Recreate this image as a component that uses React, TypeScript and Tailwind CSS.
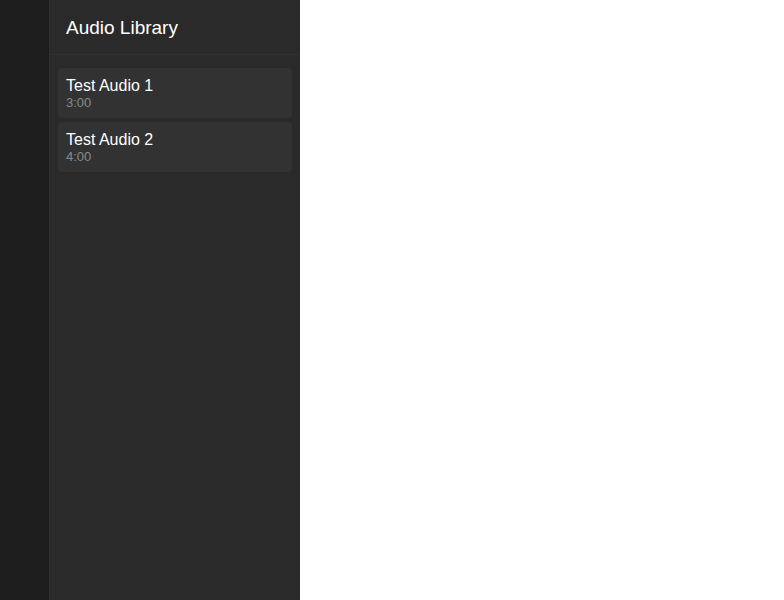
export default function App() {
  const items = [
    { title: "Test Audio 1", dur: "3:00" },
    { title: "Test Audio 2", dur: "4:00" },
  ];
  return (
    <div className="flex h-[600px] w-[784px] bg-white" style={{ fontFamily: "'Liberation Sans', Arial, sans-serif" }}>
      <div className="w-[50px] shrink-0 bg-[#1e1e1e] border-r border-[#2f2f2f]" />
      <div className="w-[250px] shrink-0 bg-[#2a2a2a] flex flex-col">
        <div className="h-[55px] shrink-0 flex items-center px-4 pt-[2px] border-b border-[#303030]">
          <span className="text-[19px] text-white">Audio Library</span>
        </div>
        <div className="flex flex-col gap-1 px-2 pt-[13px]">
          {items.map((it) => (
            <div key={it.title} className="h-[50px] rounded bg-[#323232] px-2 pt-[8px]">
              <div className="text-[16px] leading-[19px] text-white">{it.title}</div>
              <div className="text-[13px] leading-[16px] text-[#8a8a8a]">{it.dur}</div>
            </div>
          ))}
        </div>
      </div>
      <div className="flex-1 bg-white" />
    </div>
  );
}
